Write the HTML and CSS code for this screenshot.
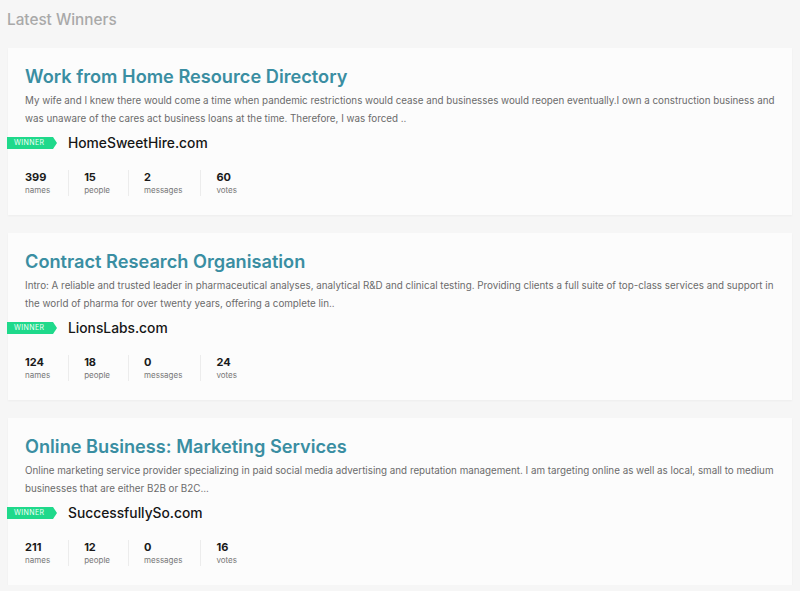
FILE: index.html
```html
<!DOCTYPE html>
<html>
<head>
<meta charset="utf-8">
<link rel="stylesheet" href="styles.css">
</head>
<body>
<h2 class="heading">Latest Winners</h2>
<div class="list">
  <div class="card">
    <h3 class="title">Work from Home Resource Directory</h3>
    <p class="desc">My wife and I knew there would come a time when pandemic restrictions would cease and businesses would reopen eventually.I own a construction business and was unaware of the cares act business loans at the time. Therefore, I was forced ..</p>
    <div class="winner"><span class="badge">WINNER</span><span class="domain">HomeSweetHire.com</span></div>
    <div class="stats">
      <div class="stat"><b>399</b><span>names</span></div>
      <div class="stat"><b>15</b><span>people</span></div>
      <div class="stat"><b>2</b><span>messages</span></div>
      <div class="stat"><b>60</b><span>votes</span></div>
    </div>
  </div>
  <div class="card">
    <h3 class="title">Contract Research Organisation</h3>
    <p class="desc">Intro: A reliable and trusted leader in pharmaceutical analyses, analytical R&amp;D and clinical testing. Providing clients a full suite of top-class services and support in the world of pharma for over twenty years, offering a complete lin..</p>
    <div class="winner"><span class="badge">WINNER</span><span class="domain">LionsLabs.com</span></div>
    <div class="stats">
      <div class="stat"><b>124</b><span>names</span></div>
      <div class="stat"><b>18</b><span>people</span></div>
      <div class="stat"><b>0</b><span>messages</span></div>
      <div class="stat"><b>24</b><span>votes</span></div>
    </div>
  </div>
  <div class="card">
    <h3 class="title">Online Business: Marketing Services</h3>
    <p class="desc">Online marketing service provider specializing in paid social media advertising and reputation management. I am targeting online as well as local, small to medium businesses that are either B2B or B2C...</p>
    <div class="winner"><span class="badge">WINNER</span><span class="domain">SuccessfullySo.com</span></div>
    <div class="stats">
      <div class="stat"><b>211</b><span>names</span></div>
      <div class="stat"><b>12</b><span>people</span></div>
      <div class="stat"><b>0</b><span>messages</span></div>
      <div class="stat"><b>16</b><span>votes</span></div>
    </div>
  </div>
</div>
</body>
</html>
```
FILE: styles.css
```css
html, body {
  margin: 0;
  padding: 0;
  background: #f6f6f6;
  font-family: Inter, "Noto Sans", sans-serif;
}
body {
  padding: 9px 8px 0 8px;
}
.heading {
  margin: 0 0 0 -1px;
  font-size: 15.3px;
  font-weight: 500;
  color: #a9a9a9;
  line-height: 22px;
}
.list {
  display: flex;
  flex-direction: column;
  gap: 18px;
  margin-top: 17px;
}
.card {
  background: #fcfcfc;
  box-shadow: 0 1px 2px rgba(0,0,0,0.04);
  padding: 16px 8px 15px 17px;
  height: 167px;
  box-sizing: border-box;
}
.title {
  margin: 0;
  font-size: 18.2px;
  font-weight: 600;
  color: #3a8ea2;
  line-height: 24px;
}
.desc {
  margin: 4px 0 0 0;
  font-size: 9.8px;
  color: #6b6b6b;
  line-height: 18px;
}
.winner {
  display: flex;
  align-items: center;
  margin: 6px 0 0 -18px;
  height: 18px;
}
.badge {
  background: #1fd98b;
  color: #f2fff8;
  font-size: 7px;
  letter-spacing: 0.4px;
  height: 12px;
  line-height: 12px;
  padding: 0 9px 0 7px;
  width: 34px;
  clip-path: polygon(0 0, calc(100% - 4px) 0, 100% 50%, calc(100% - 4px) 100%, 0 100%);
  margin-right: 11px;
}
.domain {
  font-size: 13.8px;
  font-weight: 500;
  color: #161616;
}
.stats {
  display: flex;
  margin-top: 18px;
}
.stat {
  display: flex;
  flex-direction: column;
  padding: 0 18px 0 15px;
  border-left: 1px solid #ececec;
}
.stat:first-child {
  padding-left: 0;
  border-left: none;
}
.stat b {
  font-size: 11px;
  font-weight: 700;
  color: #1a1a1a;
  line-height: 14px;
}
.stat span {
  font-size: 8px;
  color: #777;
  line-height: 12px;
}
```
